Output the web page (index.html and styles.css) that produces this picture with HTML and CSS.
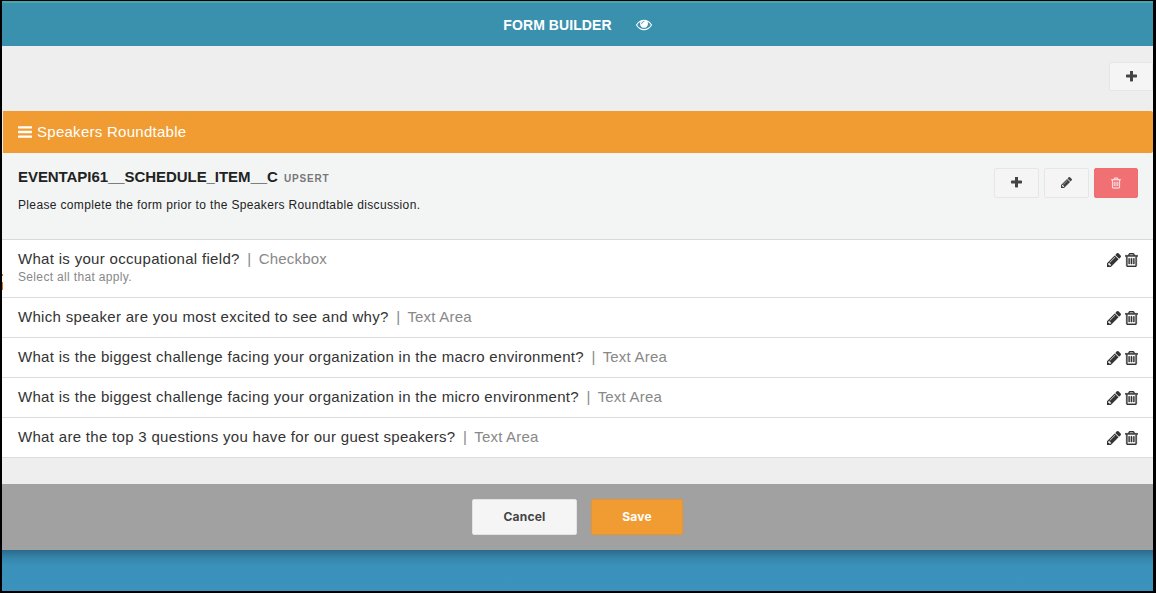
FILE: index.html
```html
<!DOCTYPE html>
<html lang="en">
<head>
<meta charset="utf-8">
<title>Form Builder</title>
<link rel="stylesheet" href="styles.css">
</head>
<body>
<svg class="sprites" width="0" height="0" aria-hidden="true">
  <symbol id="i-plus" viewBox="192 192 1408 1408"><path d="M1600 736v192q0 40-28 68t-68 28h-416v416q0 40-28 68t-68 28h-192q-40 0-68-28t-28-68v-416h-416q-40 0-68-28t-28-68v-192q0-40 28-68t68-28h416v-416q0-40 28-68t68-28h192q40 0 68 28t28 68v416h416q40 0 68 28t28 68z"/></symbol>
  <symbol id="i-pencil" viewBox="128 149 1515 1515"><path d="M491 1536l91-91-235-235-91 91v107h128v128h107zm523-928q0-22-22-22-10 0-17 7l-542 542q-7 7-7 17 0 22 22 22 10 0 17-7l542-542q7-7 7-17zm-54-192l416 416-832 832h-416v-416zm683 96q0 53-37 90l-166 166-416-416 166-165q36-38 90-38 53 0 91 38l235 234q37 39 37 91z"/></symbol>
  <symbol id="i-trash" viewBox="192 128 1408 1536"><path d="M704 736v576q0 14-9 23t-23 9h-64q-14 0-23-9t-9-23v-576q0-14 9-23t23-9h64q14 0 23 9t9 23zm256 0v576q0 14-9 23t-23 9h-64q-14 0-23-9t-9-23v-576q0-14 9-23t23-9h64q14 0 23 9t9 23zm256 0v576q0 14-9 23t-23 9h-64q-14 0-23-9t-9-23v-576q0-14 9-23t23-9h64q14 0 23 9t9 23zm128 724v-948h-896v948q0 22 7 40.500t14.500 27 10.500 8.500h832q3 0 10.500-8.500t14.500-27 7-40.500zm-672-1076h448l-48-117q-7-9-17-11h-317q-10 2-17 11zm928 32v64q0 14-9 23t-23 9h-96v948q0 83-47 143.500t-113 60.500h-832q-66 0-113-58.500t-47-141.500v-952h-96q-14 0-23-9t-9-23v-64q0-14 9-23t23-9h309l70-167q15-37 54-63t79-26h320q40 0 79 26t54 63l70 167h309q14 0 23 9t9 23z"/></symbol>
  <symbol id="i-eye" viewBox="0 320 1792 1280"><path d="M1664 960q-152-236-381-353 61 104 61 225 0 185-131.500 316.500t-316.500 131.500-316.500-131.500-131.500-316.500q0-121 61-225-229 117-381 353 133 205 333.500 326.500t434.500 121.500 434.500-121.500 333.500-326.500zm-720-384q0-20-14-34t-34-14q-125 0-214.500 89.500t-89.500 214.500q0 20 14 34t34 14 34-14 14-34q0-86 61-147t147-61q20 0 34-14t14-34zm848 384q0 34-20 69-140 230-376.500 368.500t-499.500 138.500-499.500-139-376.500-368q-20-35-20-69t20-69q140-229 376.500-368t499.500-139 499.500 139 376.500 368q20 35 20 69z"/></symbol>
  <symbol id="i-bars" viewBox="128 256 1536 1280"><path d="M1664 1344v128q0 26-19 45t-45 19h-1408q-26 0-45-19t-19-45v-128q0-26 19-45t45-19h1408q26 0 45 19t19 45zm0-512v128q0 26-19 45t-45 19h-1408q-26 0-45-19t-19-45v-128q0-26 19-45t45-19h1408q26 0 45 19t19 45zm0-512v128q0 26-19 45t-45 19h-1408q-26 0-45-19t-19-45v-128q0-26 19-45t45-19h1408q26 0 45 19t19 45z"/></symbol>
</svg>
<div class="frame">
  <header class="topbar">
    <span class="topbar-title">FORM BUILDER</span>
    <svg class="eye"><use href="#i-eye"/></svg>
  </header>
  <main class="content">
    <div class="toolbar">
      <button class="btn btn-tool btn-add-top" type="button"><svg class="ic-plus"><use href="#i-plus"/></svg></button>
    </div>
    <section class="section-bar">
      <svg class="bars"><use href="#i-bars"/></svg>
      <span>Speakers Roundtable</span>
    </section>
    <section class="object">
      <div class="object-text">
        <h2 class="object-title">EVENTAPI61__SCHEDULE_ITEM__C <small>UPSERT</small></h2>
        <p class="object-desc">Please complete the form prior to the Speakers Roundtable discussion.</p>
      </div>
      <div class="object-actions">
        <button class="btn btn-tool" type="button"><svg class="ic-plus"><use href="#i-plus"/></svg></button>
        <button class="btn btn-tool" type="button"><svg class="ic-pen"><use href="#i-pencil"/></svg></button>
        <button class="btn btn-danger" type="button"><svg class="ic-del"><use href="#i-trash"/></svg></button>
      </div>
    </section>
    <ul class="questions">
      <li class="question question-tall">
        <div>
          <div class="q-line">What is your occupational field? <span class="q-type"><span class="q-sep">|</span> Checkbox</span></div>
          <div class="q-help">Select all that apply.</div>
        </div>
        <div class="q-actions"><svg class="q-pen"><use href="#i-pencil"/></svg><svg class="q-del"><use href="#i-trash"/></svg></div>
      </li>
      <li class="question">
        <div class="q-line">Which speaker are you most excited to see and why? <span class="q-type"><span class="q-sep">|</span> Text Area</span></div>
        <div class="q-actions"><svg class="q-pen"><use href="#i-pencil"/></svg><svg class="q-del"><use href="#i-trash"/></svg></div>
      </li>
      <li class="question">
        <div class="q-line">What is the biggest challenge facing your organization in the macro environment? <span class="q-type"><span class="q-sep">|</span> Text Area</span></div>
        <div class="q-actions"><svg class="q-pen"><use href="#i-pencil"/></svg><svg class="q-del"><use href="#i-trash"/></svg></div>
      </li>
      <li class="question">
        <div class="q-line">What is the biggest challenge facing your organization in the micro environment? <span class="q-type"><span class="q-sep">|</span> Text Area</span></div>
        <div class="q-actions"><svg class="q-pen"><use href="#i-pencil"/></svg><svg class="q-del"><use href="#i-trash"/></svg></div>
      </li>
      <li class="question">
        <div class="q-line">What are the top 3 questions you have for our guest speakers? <span class="q-type"><span class="q-sep">|</span> Text Area</span></div>
        <div class="q-actions"><svg class="q-pen"><use href="#i-pencil"/></svg><svg class="q-del"><use href="#i-trash"/></svg></div>
      </li>
    </ul>
  </main>
  <footer class="footer">
    <button class="btn btn-cancel" type="button">Cancel</button>
    <button class="btn btn-save" type="button">Save</button>
  </footer>
  <div class="under"></div>
</div>
</body>
</html>
```

FILE: styles.css
```css
* { box-sizing: border-box; }
html, body { margin: 0; height: 100%; background: #000; }
body { font-family: "Liberation Sans", Arial, sans-serif; overflow: hidden; }
.sprites { position: absolute; }
.frame {
  height: 593px;
  padding: 1px 3px 2px 2px;
  display: flex;
  flex-direction: column;
}
.topbar {
  height: 45px;
  flex: none;
  background: #3a91ae;
  border-top: 2px solid #4aa6ac;
  display: flex;
  align-items: center;
  justify-content: center;
  color: #fff;
}
.topbar-title { font-size: 14px; font-weight: 700; letter-spacing: .08px; }
.eye { width: 16px; height: 12px; margin-left: 24px; fill: #fff; }
.content { flex: 1; background: #eeeeee; display: flex; flex-direction: column; }
.toolbar { height: 65px; flex: none; display: flex; justify-content: flex-end; align-items: flex-start; padding-top: 16px; }
.btn { font-family: inherit; padding: 0; border-radius: 2px; cursor: pointer; display: flex; align-items: center; justify-content: center; }
.btn-tool { width: 45px; height: 30px; background: #f5f5f5; border: 1px solid #e6e6e6; padding-bottom: 2px; }
.btn-add-top { width: 44px; height: 29px; padding-bottom: 1px; }
.ic-plus { width: 11px; height: 11px; fill: #444; }
.ic-pen { width: 11px; height: 11px; fill: #444; }
.ic-del { width: 10px; height: 12px; fill: #fff; opacity: .9; }
.btn-danger { width: 44px; height: 30px; background: #f17074; border: 1px solid #ee6e72; padding-bottom: 1px; }
.section-bar {
  height: 42px;
  flex: none;
  margin-left: 1px;
  background: #f09c32;
  color: #fff;
  font-size: 15px;
  letter-spacing: .27px;
  display: flex;
  align-items: center;
  padding-left: 15px;
  padding-bottom: 1px;
  gap: 5px;
  border-radius: 0 2px 2px 0;
}
.bars { width: 14px; height: 12px; fill: #fff; }
.object {
  height: 87px;
  flex: none;
  background: #f3f5f5;
  border-bottom: 1px solid #d9d9d9;
  padding: 15px 15px 0 16px;
  display: flex;
  justify-content: space-between;
}
.object-title { margin: 0; font-size: 15px; line-height: 18px; font-weight: 700; color: #222; letter-spacing: -.06px; }
.object-title small { font-size: 10px; color: #777; letter-spacing: .85px; margin-left: 2px; }
.object-desc { margin: 10px 0 0; font-size: 12px; line-height: 15px; color: #222; letter-spacing: .35px; }
.object-actions { display: flex; gap: 5px; }
.questions { list-style: none; margin: 0; padding: 0; background: #fff; }
.question {
  height: 40px;
  border-bottom: 1px solid #dcdcdc;
  padding: 0 15px 0 16px;
  display: flex;
  justify-content: space-between;
  align-items: center;
  font-size: 15px;
  color: #333;
}
.question-tall { height: 58px; align-items: flex-start; padding-top: 10px; position: relative; }
.question-tall::before, .question-tall::after { content: ""; position: absolute; left: 0; width: 1px; background: #f06a1a; }
.question-tall::before { top: 34px; height: 2px; }
.question-tall::after { top: 42px; height: 8px; }
.q-line { letter-spacing: .31px; line-height: 18px; margin-top: -2px; }
.question-tall .q-line { margin-top: 0; }
.q-type { color: #888; margin-left: 3px; letter-spacing: .2px; }
.q-sep { margin-right: 3px; }
.q-help { font-size: 12px; line-height: 14px; color: #888; margin-top: 2px; letter-spacing: .34px; }
.q-actions { display: flex; gap: 4px; align-items: center; padding-top: 1px; }
.question-tall .q-actions { padding-top: 3px; }
.q-pen { width: 14px; height: 14px; fill: #333; }
.q-del { width: 13px; height: 14px; fill: #333; stroke: #333; stroke-width: 40; }
.footer {
  height: 66px;
  flex: none;
  background: #a1a1a1;
  display: flex;
  justify-content: center;
  align-items: center;
  gap: 14px;
  margin-top: auto;
}
.btn-cancel, .btn-save { height: 36px; font-family: Inter, "Liberation Sans", sans-serif; font-size: 12px; font-weight: 700; letter-spacing: .2px; padding-bottom: 2px; }
.btn-cancel { width: 105px; background: #f5f5f5; border: 1px solid #e3e3e3; color: #444; }
.btn-save { width: 92px; background: #f09c32; border: 1px solid #e59430; color: #fff; }
.under { height: 41px; flex: none; background: linear-gradient(#2b6a8c 0, #3686ab 8px, #3a92bb 16px, #3b93bd 100%); }
```
